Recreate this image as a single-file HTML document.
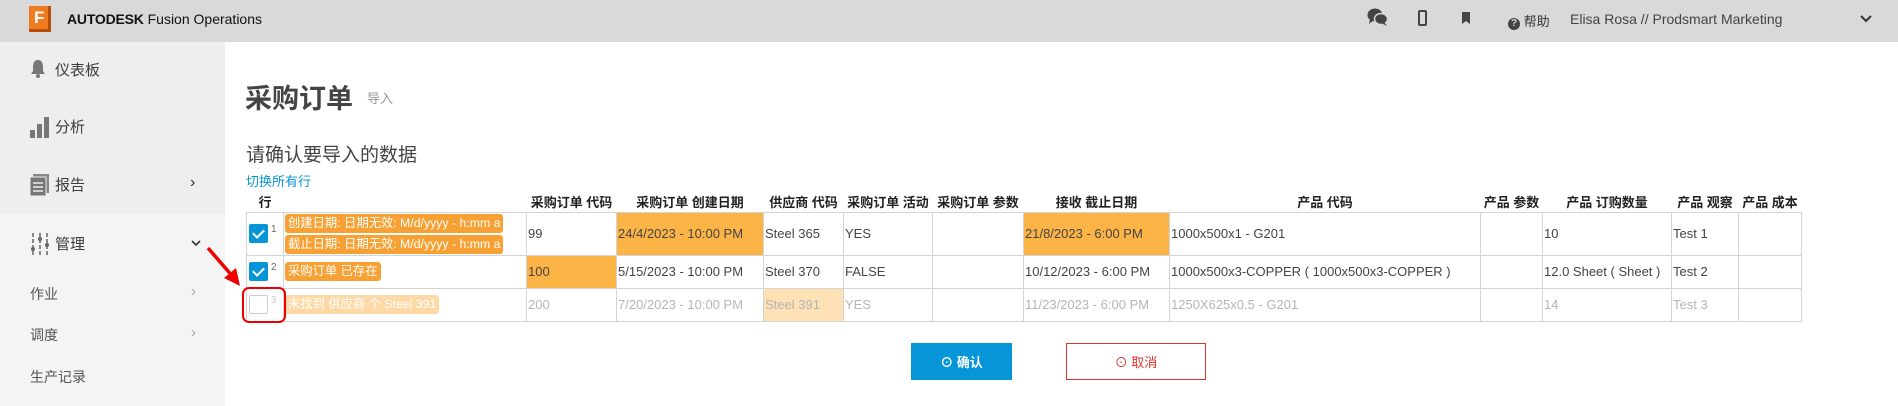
<!DOCTYPE html>
<html><head><meta charset="utf-8"><style>
*{margin:0;padding:0;box-sizing:border-box}
body{width:1898px;height:406px;overflow:hidden;background:#fff;font-family:"Liberation Sans","Noto Sans CJK SC",sans-serif;color:#3c3c3c;position:relative}
.hdr{position:absolute;left:0;top:0;width:1898px;height:42px;background:#d9d9d9}
.side{position:absolute;left:0;top:42px;width:225px;height:364px;background:#f4f4f4}
.side .top{position:absolute;left:0;top:0;width:225px;height:171px;background:#eeeeee}
.abs{position:absolute;white-space:nowrap}
.nav{font-size:15px;color:#3c3c3c}
.sub{font-size:14px;color:#555}
table{position:absolute;left:246px;top:191px;border-collapse:collapse;table-layout:fixed;font-size:13px}
th{font-weight:bold;font-size:13px;color:#222;height:21px;text-align:center;white-space:nowrap;padding:0}
td{border:1px solid #d4d4d4;padding:0 1px;white-space:nowrap;overflow:hidden;color:#444}
tr.r1 td{height:43px}tr.r2 td,tr.r3 td{height:33px}
tr.r3 td{color:#b5b5b5}
.hi{background:#fdb447}
.hl{background:#fee2b6}
.cb{display:inline-block;width:19px;height:19px;background:#0696d7;border-radius:2px;vertical-align:middle;position:relative}
.cb:after{content:"";position:absolute;left:6px;top:3px;width:5px;height:9px;border:solid #fff;border-width:0 2px 2px 0;transform:rotate(45deg)}
.cb.off{background:#fff;border:1px solid #ccc}.cb.off:after{display:none}
.num{font-size:10px;color:#666;vertical-align:top;margin-left:3px}
.chip{display:inline-block;background:#f7a134;color:#fff;font-size:12.3px;padding:1px 3px;border-radius:3px;margin:1px 0;line-height:17px}
.chip.l{background:#fdd9a6}
.btn{position:absolute;top:343px;height:37px;font-size:13px;font-weight:bold;display:flex;align-items:center;justify-content:center}
</style></head><body>
<div class="hdr">
 <div class="abs" style="left:29px;top:6px;width:22px;height:26px;background:#f07b1f;border-right:3px solid #b74e0c;border-bottom:3px solid #b74e0c"><span style="position:absolute;left:5px;top:2px;color:#fff;font-weight:bold;font-size:17px">F</span></div>
 <div class="abs" style="left:67px;top:11px;font-size:14px;color:#111"><b style="letter-spacing:-0.2px">AUTODESK</b> Fusion Operations</div>
 <svg class="abs" style="left:1367px;top:7px" width="22" height="20" viewBox="0 0 22 20"><ellipse cx="8" cy="8" rx="7.5" ry="6.5" fill="#444"/><path d="M3 12 L2 17 L7 13Z" fill="#444"/><ellipse cx="14" cy="12" rx="6.5" ry="5.5" fill="#444" stroke="#d9d9d9" stroke-width="1.5"/><path d="M17 15 L20 19 L14 16Z" fill="#444"/></svg>
 <div class="abs" style="left:1418px;top:10px;width:9px;height:16px;border:2px solid #444;border-radius:2px"></div>
 <svg class="abs" style="left:1462px;top:12px" width="8" height="12"><path d="M0 0H8V12L4 9L0 12Z" fill="#444"/></svg>
 <div class="abs" style="left:1508px;top:11px;font-size:13px;color:#333"><span style="display:inline-block;width:12px;height:12px;border-radius:50%;background:#444;color:#d9d9d9;font-size:10px;text-align:center;line-height:12px;font-weight:bold">?</span> 帮助</div>
 <div class="abs" style="left:1570px;top:11px;font-size:14px;color:#444">Elisa Rosa // Prodsmart Marketing</div>
 <svg class="abs" style="left:1860px;top:15px" width="12" height="8"><path d="M1 1L6 6L11 1" stroke="#333" stroke-width="2" fill="none"/></svg>
</div>
<div class="side"><div class="top"></div></div>
<svg class="abs" style="left:30px;top:59px" width="16" height="20"><path d="M8 1C4 1 3 5 3 8V12L1 15H15L13 12V8C13 5 12 1 8 1Z" fill="#777"/><circle cx="8" cy="17" r="2" fill="#777"/></svg>
<div class="abs nav" style="left:55px;top:59px">仪表板</div>
<svg class="abs" style="left:30px;top:116px" width="20" height="22"><rect x="0" y="14" width="5" height="8" fill="#777"/><rect x="7" y="8" width="5" height="14" fill="#777"/><rect x="14" y="1" width="5" height="21" fill="#777"/></svg>
<div class="abs nav" style="left:55px;top:116px">分析</div>
<svg class="abs" style="left:30px;top:174px" width="20" height="22"><rect x="3" y="0" width="16" height="19" fill="#888"/><rect x="0" y="3" width="16" height="19" fill="#777" stroke="#eee" stroke-width="1"/><path d="M3 9H13M3 13H13M3 17H13" stroke="#eee" stroke-width="1.5"/></svg>
<div class="abs nav" style="left:55px;top:174px">报告</div>
<div class="abs" style="left:190px;top:174px;font-size:16px;color:#333">›</div>
<svg class="abs" style="left:31px;top:233px" width="20" height="22"><path d="M2 0V22M9 0V22M16 0V22" stroke="#888" stroke-width="2" stroke-dasharray="4 2"/><circle cx="2" cy="16" r="2" fill="#666"/><circle cx="9" cy="6" r="2" fill="#666"/><circle cx="16" cy="12" r="2" fill="#666"/></svg>
<div class="abs nav" style="left:55px;top:233px">管理</div>
<svg class="abs" style="left:191px;top:240px" width="10" height="7"><path d="M1 1L5 5L9 1" stroke="#333" stroke-width="1.6" fill="none"/></svg>
<div class="abs sub" style="left:30px;top:284px">作业</div><div class="abs" style="left:191px;top:283px;color:#aaa;font-size:15px">›</div>
<div class="abs sub" style="left:30px;top:325px">调度</div><div class="abs" style="left:191px;top:324px;color:#aaa;font-size:15px">›</div>
<div class="abs sub" style="left:30px;top:367px">生产记录</div>

<div class="abs" style="left:245px;top:77px;font-size:27px;font-weight:bold;color:#444">采购订单</div>
<div class="abs" style="left:367px;top:88px;font-size:13px;color:#999">导入</div>
<div class="abs" style="left:246px;top:140px;font-size:19px;color:#444">请确认要导入的数据</div>
<div class="abs" style="left:246px;top:171px;font-size:13px;color:#0696d7">切换所有行</div>

<table>
<colgroup><col style="width:37px"><col style="width:243px"><col style="width:90px"><col style="width:147px"><col style="width:80px"><col style="width:89px"><col style="width:91px"><col style="width:146px"><col style="width:311px"><col style="width:62px"><col style="width:129px"><col style="width:67px"><col style="width:63px"></colgroup>
<tr><th style="text-align:left;padding-left:12px">行</th><th></th><th>采购订单 代码</th><th>采购订单 创建日期</th><th>供应商 代码</th><th>采购订单 活动</th><th>采购订单 参数</th><th>接收 截止日期</th><th>产品 代码</th><th>产品 参数</th><th>产品 订购数量</th><th>产品 观察</th><th>产品 成本</th></tr>
<tr class="r1"><td style="padding-left:2px"><span class="cb"></span><span class="num">1</span></td><td><span class="chip">创建日期: 日期无效: M/d/yyyy - h:mm a</span><br><span class="chip">截止日期: 日期无效: M/d/yyyy - h:mm a</span></td><td>99</td><td class="hi">24/4/2023 - 10:00 PM</td><td>Steel 365</td><td>YES</td><td></td><td class="hi">21/8/2023 - 6:00 PM</td><td>1000x500x1 - G201</td><td></td><td>10</td><td>Test 1</td><td></td></tr>
<tr class="r2"><td style="padding-left:2px"><span class="cb"></span><span class="num">2</span></td><td><span class="chip">采购订单 已存在</span></td><td class="hi">100</td><td>5/15/2023 - 10:00 PM</td><td>Steel 370</td><td>FALSE</td><td></td><td>10/12/2023 - 6:00 PM</td><td>1000x500x3-COPPER ( 1000x500x3-COPPER )</td><td></td><td>12.0 Sheet ( Sheet )</td><td>Test 2</td><td></td></tr>
<tr class="r3"><td style="padding-left:2px"><span class="cb off"></span><span class="num" style="color:#ccc">3</span></td><td><span class="chip l">未找到 供应商 个 Steel 391</span></td><td>200</td><td>7/20/2023 - 10:00 PM</td><td class="hl">Steel 391</td><td>YES</td><td></td><td>11/23/2023 - 6:00 PM</td><td>1250X625x0.5 - G201</td><td></td><td>14</td><td>Test 3</td><td></td></tr>
</table>

<div class="abs" style="left:242px;top:287px;width:44px;height:36px;border:2.5px solid #e00;border-radius:7px"></div>
<svg class="abs" style="left:200px;top:240px" width="45" height="50"><path d="M8 8L34 38" stroke="#e00" stroke-width="3.5"/><path d="M40 46L24 38L36 28Z" fill="#e00"/></svg>

<div class="btn" style="left:911px;width:101px;background:#0696d7;color:#fff">⊙ 确认</div>
<div class="btn" style="left:1066px;width:140px;border:1px solid #e0302c;color:#e0302c;font-weight:normal">⊙ 取消</div>
</body></html>
